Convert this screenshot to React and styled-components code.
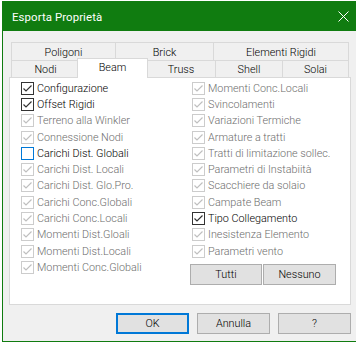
import React from 'react';
import styled, { createGlobalStyle } from 'styled-components';

const FONT = 'Roboto, "Liberation Sans", Arial, sans-serif';

const Global = createGlobalStyle`
  html, body { margin: 0; padding: 0; background: #fff; width: 356px; height: 344px; overflow: hidden; }
  body { font-family: ${FONT}; font-size: 10.8px; font-weight: 300; }
`;

const Page = styled.div`
  width: 356px;
  height: 344px;
  box-sizing: border-box;
  padding: 1px 0 0 2px;
  overflow: hidden;
`;

const Window = styled.div`
  width: 356px;
  height: 341px;
  box-sizing: border-box;
  border: 1px solid #107c10;
  background: #f0f0f0;
  display: flex;
  flex-direction: column;
`;

const TitleBar = styled.div`
  height: 29px;
  flex: none;
  background: #107c10;
  color: #fff;
  display: flex;
  align-items: center;
  justify-content: space-between;
  padding: 1px 8px 0 9px;
  box-sizing: border-box;
  font-size: 11.4px;
  font-weight: 400;
  letter-spacing: 0.1px;
`;

const Close = styled.svg`
  width: 11px;
  height: 11px;
  display: block;
  margin-top: -2px;
`;

const Body = styled.div`
  flex: 1;
  padding: 11px 0 0 6px;
  display: flex;
  flex-direction: column;
`;

const TabStrip = styled.div`
  margin-left: 2px;
  width: 338px;
  display: flex;
  flex-direction: column;
`;

const TabRow = styled.div`
  display: flex;
  height: ${p => p.$h}px;
`;

const Tab = styled.div`
  flex: none;
  box-sizing: border-box;
  width: ${p => p.$w}px;
  border-top: 1px solid #d9d9d9;
  border-left: 1px solid #d9d9d9;
  border-right: ${p => (p.$last ? '1px solid #d9d9d9' : 'none')};
  background: #f0f0f0;
  color: #000;
  display: flex;
  align-items: center;
  justify-content: center;
  padding-top: 1px;
`;

const ActiveTab = styled(Tab)`
  position: relative;
  z-index: 1;
  width: ${p => p.$w + 4}px;
  height: ${p => p.$h + 3}px;
  margin: -2px -2px -1px;
  background: #fff;
  border-right: 1px solid #d9d9d9;
  padding-top: 0;
  padding-bottom: 2px;
`;

const Panel = styled.div`
  width: 342px;
  height: 228px;
  box-sizing: border-box;
  border: 1px solid #d9d9d9;
  background: #fff;
  padding: 2px 0 0 11px;
  display: grid;
  grid-template-columns: 171px 1fr;
  align-items: start;
`;

const Column = styled.div`
  display: flex;
  flex-direction: column;
`;

const Row = styled.div`
  height: 16.3px;
  display: flex;
  align-items: center;
  gap: 3px;
  color: ${p => (p.$disabled ? '#6d6d6d' : '#000')};
  white-space: nowrap;
`;

const Box = styled.span`
  width: 13px;
  height: 13px;
  box-sizing: border-box;
  flex: none;
  background: #fff;
  border: 1px solid ${p => p.$color};
  display: flex;
  align-items: center;
  justify-content: center;
`;

const Mini = styled.div`
  display: flex;
  gap: 1px;
  margin: 5px 0 0 -2px;
`;

const Button = styled.button`
  width: ${p => p.$w || 73}px;
  height: 21px;
  box-sizing: border-box;
  padding: 0;
  margin: 0;
  background: #e1e1e1;
  border: ${p => (p.$default ? '2px solid #0078d7' : '1px solid #adadad')};
  font-family: ${FONT};
  font-size: 10.8px;
  font-weight: 300;
  color: #000;
`;

const Footer = styled.div`
  width: 342px;
  display: flex;
  justify-content: flex-end;
  gap: 8px;
  margin-top: 8px;
`;

function Check({ checked, disabled, focus, label }) {
  const border = disabled ? '#cccccc' : focus ? '#0078d7' : '#333333';
  const mark = disabled ? '#bfbfbf' : '#333333';
  return (
    <Row $disabled={disabled}>
      <Box $color={border}>
        {checked && (
          <svg width="11" height="11" viewBox="0 0 11 11">
            <polyline points="1.5,5.5 4,8 9.5,2.5" fill="none" stroke={mark} strokeWidth="1.2" />
          </svg>
        )}
      </Box>
      <span>{label}</span>
    </Row>
  );
}

const left = [
  ['Configurazione', true, false],
  ['Offset Rigidi', true, false],
  ['Terreno alla Winkler', true, true],
  ['Connessione Nodi', true, true],
  ['Carichi Dist. Globali', false, false, true],
  ['Carichi Dist. Locali', true, true],
  ['Carichi Dist. Glo.Pro.', true, true],
  ['Carichi Conc.Globali', true, true],
  ['Carichi Conc.Locali', true, true],
  ['Momenti Dist.Gloali', true, true],
  ['Momenti Dist.Locali', true, true],
  ['Momenti Conc.Globali', true, true],
];

const right = [
  ['Momenti Conc.Locali', true, true],
  ['Svincolamenti', true, true],
  ['Variazioni Termiche', true, true],
  ['Armature a tratti', true, true],
  ['Tratti di limitazione sollec.', true, true],
  ['Parametri di Instabiità', true, true],
  ['Scacchiere da solaio', true, true],
  ['Campate Beam', true, true],
  ['Tipo Collegamento', true, false],
  ['Inesistenza Elemento', true, true],
  ['Parametri vento', true, true],
];

export default function App() {
  return (
    <>
      <Global />
      <Page>
        <Window>
          <TitleBar>
            <span>Esporta Proprietà</span>
            <Close viewBox="0 0 11 11">
              <path d="M0.5 0.5 L10.5 10.5 M10.5 0.5 L0.5 10.5" stroke="#fff" strokeWidth="1" />
            </Close>
          </TitleBar>
          <Body>
            <TabStrip>
              <TabRow $h={18}>
                <Tab $w={104}>Poligoni</Tab>
                <Tab $w={98}>Brick</Tab>
                <Tab $w={136} $last>Elementi Rigidi</Tab>
              </TabRow>
              <TabRow $h={17}>
                <Tab $w={68}>Nodi</Tab>
                <ActiveTab $w={67} $h={17}>Beam</ActiveTab>
                <Tab $w={69}>Truss</Tab>
                <Tab $w={67}>Shell</Tab>
                <Tab $w={67} $last>Solai</Tab>
              </TabRow>
            </TabStrip>
            <Panel>
              <Column>
                {left.map(([l, c, d, f]) => (
                  <Check key={l} label={l} checked={c} disabled={d} focus={f} />
                ))}
              </Column>
              <Column>
                {right.map(([l, c, d, f]) => (
                  <Check key={l} label={l} checked={c} disabled={d} focus={f} />
                ))}
                <Mini>
                  <Button $w={72}>Tutti</Button>
                  <Button $w={73}>Nessuno</Button>
                </Mini>
              </Column>
            </Panel>
            <Footer>
              <Button $default>OK</Button>
              <Button>Annulla</Button>
              <Button>?</Button>
            </Footer>
          </Body>
        </Window>
      </Page>
    </>
  );
}
